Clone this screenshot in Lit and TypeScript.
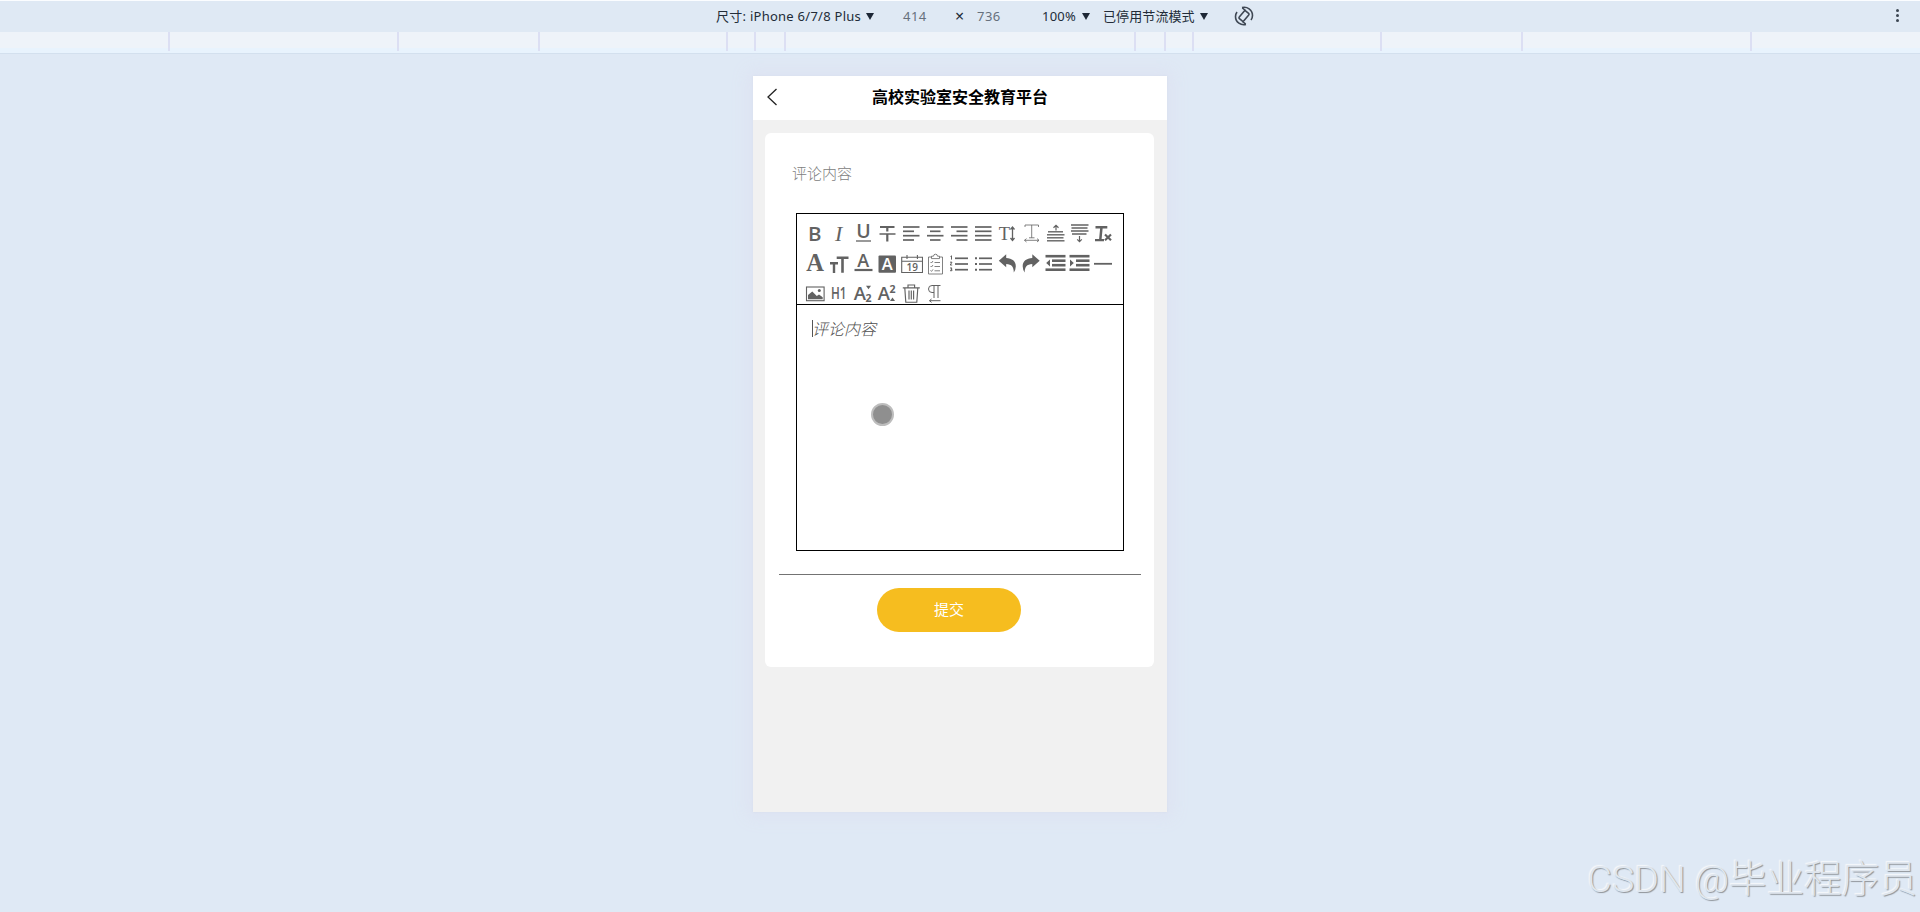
import { LitElement, html, svg, css } from "lit";
import { customElement } from "lit/decorators.js";

// Every glyph is drawn in a 24x30 toolbar cell.
const lines = (rows: number[][], width = 1.7) =>
  svg`${rows.map(
    ([x1, x2, y]) =>
      svg`<line x1=${x1} x2=${x2} y1=${y} y2=${y} stroke-width=${width}></line>`
  )}`;

const calendar = svg`
  <path d="M2.700 8.200h20.800v15.300H2.700zM2.700 12.300h20.800M8 6v4M18.400 6v4" stroke-width="1.100"></path>
  <text x="13.200" y="22" class="sans semi" font-size="10" text-anchor="middle">19</text>`;

const clipboard = svg`
  <path d="M8.500 8H5.500v17h14V8h-3M8.500 9.600V7.200h2a2 2 0 0 1 4 0h2v2.400z" stroke-width=".8"></path>
  <path d="M7.500 13l1 1 1.500-2M7.500 17l1 1 1.500-2M7.500 21.400l1 1 1.500-2M11.500 13.500h5.500M11.500 17.500h5.500M11.500 21.800h5.500" stroke-width=".8"></path>`;

const undo = svg`<path class="fill" d="M3.800 11.700L11.200 5.300V9.100C17 9.200 21 12.500 20.800 17.500Q20.700 20.800 18.800 23.500C18.800 18 16.800 15.200 11.200 15V18.300z"></path>`;

const trash = svg`
  <path d="M3.800 8.800h17M9 8.500V6h6.600v2.500M5.800 9l1 14.200h11L18.800 9M10 11.500v9M12.300 11.500v9M14.600 11.500v9" stroke-width="1.150"></path>`;

const indentRows = lines(
  [[2.5, 22.5, 7.2], [9, 22.5, 11.7], [9, 22.5, 16.2], [2.5, 22.5, 20.7]],
  2.6
);

const ICONS = [
  svg`<text x="5" y="22" class="sans semi" font-size="20.500">B</text>`,
  svg`<text x="8" y="21.800" class="serif italic" font-size="22">I</text>`,
  svg`<text x="12.500" y="19" class="sans semi" font-size="19.500" text-anchor="middle">U</text>${lines([[5, 20, 22]], 1.3)}`,
  svg`${lines([[5, 19.5, 8]], 2)}${lines([[4.5, 20.5, 15]], 1.5)}<path d="M12.300 8v4.500M12.300 15v7.500" stroke-width="2.200"></path>`,
  lines([[4, 20.5, 8], [4, 15, 12.3], [4, 20.5, 16.7], [4, 15, 21]]),
  lines([[4, 20.5, 8], [7, 17.5, 12.3], [4, 20.5, 16.7], [7, 17.5, 21]]),
  lines([[4, 20.5, 8], [9.5, 20.5, 12.3], [4, 20.5, 16.7], [9.5, 20.5, 21]]),
  lines([[4, 20.5, 8], [4, 20.5, 12.3], [4, 20.5, 16.7], [4, 20.5, 21]]),
  svg`<text x="3.800" y="20.800" class="serif" font-size="18.500">T</text>
    <path d="M17.500 8.500v12.500M15.500 10.500l2-2.500 2 2.500M15.500 19l2 2.500 2-2.500" stroke-width="1.300"></path>`,
  svg`<path d="M6 8V6h13.500V8M12.700 6v12.800M10 18.800h5.500M5.500 21.300h14.500M7.500 19.600l-2 1.700 2 1.700M18 19.600l2 1.700-2 1.700" stroke-width=".8"></path>`,
  svg`<path d="M13 11.500V6.500M10.500 8.700L13 6.300l2.500 2.400" stroke-width="1.200"></path>
    ${lines([[5, 20, 12.8], [4, 21.5, 15.8], [4, 20.5, 18.8], [4, 21.5, 21.8]], 1.4)}`,
  svg`${lines([[4, 21.5, 6], [4.5, 20.5, 9], [4, 21.5, 12], [5, 19.5, 15]], 1.5)}
    <path d="M12.500 17v5.500M10.200 20.300l2.300 2.400 2.300-2.400" stroke-width="1.200"></path>`,
  svg`<path d="M4.500 8.200h11.800M10.500 8.200l-1.200 12.500" stroke-width="2.500"></path>
    <path d="M4 21.200h9M14 15.500l6 5.800M20 15.500l-6 5.800" stroke-width="2.200"></path>`,

  svg`<text x="12.200" y="22.200" class="serif bold" font-size="24.500" text-anchor="middle">A</text>`,
  svg`<path d="M3 14.300h8M7 14.300V24" stroke-width="2.400"></path><path d="M9.700 8.800h11.800M15.500 8.800V23.800" stroke-width="2.600"></path>`,
  svg`<text x="12.300" y="18.400" class="sans semi" font-size="18" text-anchor="middle">A</text>${lines([[3.5, 21.5, 21]], 2.2)}`,
  svg`<rect class="fill" x="3.500" y="6.500" width="17.500" height="17.200" rx="1"></rect><text x="12.200" y="21" class="sans semi white" font-size="16.500" text-anchor="middle">A</text>`,
  calendar,
  clipboard,
  svg`${lines([[8, 21, 9.3], [8, 21, 15], [8, 21, 20.7]], 1.7)}
    <path d="M3.500 7.500l1-.7v3.800M3 13.200h2l-1.800 2.800h2M3 19h2l-1 1.300q1.500 0 1 1.400h-2" stroke-width="1"></path>`,
  svg`${lines([[8, 21, 9.3], [8, 21, 15], [8, 21, 20.7]], 1.7)}${lines([[4, 6, 9.3], [4, 6, 15], [4, 6, 20.7]], 2)}`,
  undo,
  svg`<g transform="matrix(-1 0 0 1 24.500 0)">${undo}</g>`,
  svg`${indentRows}<path class="fill" d="M7 10.500v7L3.200 14z"></path>`,
  svg`${indentRows}<path class="fill" d="M3 10.500v7L6.800 14z"></path>`,
  lines([[3, 21, 14.8]], 1.8),

  svg`<rect x="3.500" y="8" width="17.600" height="13.700" stroke-width="1.100"></rect>
    <path class="fill" d="M5 20.200v-4.200l4.300-3.500 4.500 4.500 2.200-1.500 3.700 2.700v2z"></path><circle class="fill" cx="16.300" cy="11.500" r="1.500"></circle>`,
  svg`<text x="4" y="20.300" class="sans semi" font-size="16" textLength="15.500" lengthAdjust="spacingAndGlyphs">H1</text>`,
  svg`<text x="2.800" y="20.800" class="sans semi" font-size="18.500">A</text><text x="14.500" y="22.800" class="sans bold" font-size="10.500">2</text><path class="fill" d="M15 6.800h5l-2.500 3.500z"></path>`,
  svg`<text x="2.800" y="20.800" class="sans semi" font-size="18.500">A</text><text x="14.500" y="13.500" class="sans bold" font-size="10.500">2</text><path class="fill" d="M15 22h5l-2.500-3.500z"></path>`,
  trash,
  svg`<path d="M17.500 6.500H9a3.500 3.500 0 0 0 0 7H11M11 6.500v12.500M15 6.500v12.500M6.500 21.700h11M8.500 20l-2 1.700 2 1.700" stroke-width="1"></path>`,
];

@customElement("editor-toolbar")
export class EditorToolbar extends LitElement {
  static styles = css`
    :host {
      display: flex;
      flex-wrap: wrap;
      height: 91px;
      overflow: hidden;
      padding: 5px 0 0 5.5px;
      box-sizing: border-box;
      align-content: flex-start;
      border-bottom: 1px solid #000;
    }
    svg {
      width: 24px;
      height: 30px;
      flex: none;
      fill: none;
      stroke: #626262;
    }
    .fill {
      fill: #626262;
      stroke: none;
    }
    text {
      fill: #626262;
      stroke: none;
    }
    .sans {
      font-family: "Open Sans", sans-serif;
    }
    .serif {
      font-family: "Liberation Serif", serif;
    }
    .semi {
      font-weight: 600;
    }
    .bold {
      font-weight: 700;
    }
    .italic {
      font-style: italic;
    }
    .white {
      fill: #fff;
    }
  `;

  render() {
    return ICONS.map((icon) => html`<svg viewBox="0 0 24 30">${icon}</svg>`);
  }
}

@customElement("device-bar")
export class DeviceBar extends LitElement {
  static styles = css`
    :host {
      display: block;
      font: 13px/18px "Noto Sans", "Noto Sans CJK SC", sans-serif;
      color: #222c38;
    }
    .bar {
      display: flex;
      align-items: center;
      height: 32px;
      box-sizing: border-box;
      border-top: 1px solid #fbfdff;
      background: #dfe9f4;
      padding: 0 0 2px 716px;
      white-space: nowrap;
    }
    .select {
      display: flex;
      align-items: center;
      justify-content: space-between;
    }
    .select::after {
      content: "";
      margin-top: 1px;
      border: 4px solid transparent;
      border-top: 7px solid #1d2735;
      border-bottom: 0;
    }
    .device {
      width: 158px;
      letter-spacing: 0.26px;
    }
    .num {
      color: #66707c;
      width: 52px;
      margin-left: 29px;
      letter-spacing: 0.5px;
    }
    .times {
      width: 10px;
      font-size: 16px;
      margin-right: -17px;
    }
    .zoom {
      width: 48px;
      margin-left: 13px;
      letter-spacing: 0.2px;
    }
    .throttle {
      width: 105px;
      margin-left: 13px;
      letter-spacing: 0.1px;
    }
    .rotate {
      width: 20px;
      height: 20px;
      margin-left: 26px;
      fill: none;
      stroke: #3f4854;
      stroke-width: 1.6;
    }
    .more {
      display: grid;
      gap: 1.5px;
      margin: 0 21px 0 auto;
    }
    .more i {
      width: 3.5px;
      height: 3.5px;
      border-radius: 50%;
      background: #3c4652;
    }
    .ruler {
      display: flex;
      justify-content: center;
      height: 22px;
      box-sizing: border-box;
      border-bottom: 1px solid #d3e0ee;
      background: linear-gradient(#eef3f9 16px, #e8f3fd 16px);
    }
    .ruler i {
      box-sizing: border-box;
      height: 19px;
      border-right: 2px solid #dcdff3;
    }
    .ruler i:first-child {
      border-left: 2px solid #dcdff3;
    }
  `;

  render() {
    const stops = [231, 141, 188, 28, 30, 350, 30, 28, 188, 141, 229];
    return html`
      <div class="bar">
        <span class="select device">尺寸: iPhone 6/7/8 Plus</span>
        <span class="num">414</span>
        <span class="times">×</span>
        <span class="num">736</span>
        <span class="select zoom">100%</span>
        <span class="select throttle">已停用节流模式</span>
        <svg class="rotate" viewBox="0 0 20 20">
          <rect x="7" y="5" width="6" height="10" rx="1.200" transform="rotate(40 10 10)"></rect>
          <path d="M8 1.600C13 .3 18.500 3.500 18.500 9.500Q18.500 12 17 14M12 18.400C7 19.700 1.500 16.500 1.500 10.500Q1.500 8 3 6"></path>
          <path d="M11.500 4.500L8.300 1.800M8.500 15.500l3.200 2.700"></path>
        </svg>
        <span class="more"><i></i><i></i><i></i></span>
      </div>
      <div class="ruler">
        ${stops.map((w) => html`<i style="width:${w}px"></i>`)}
      </div>
    `;
  }
}

@customElement("app-root")
export class AppRoot extends LitElement {
  static styles = css`
    :host {
      display: block;
      position: relative;
      height: 912px;
      overflow: hidden;
      background: #dfe9f5;
      font-family: "Noto Sans CJK SC", sans-serif;
    }
    .phone {
      width: 414px;
      height: 736px;
      margin: 22px auto 0;
      background: #f1f1f1;
      box-shadow: 0 0 16px 6px #dee3f2, 0 0 2px #c8cfdc;
    }
    header {
      display: grid;
      grid-template-columns: 44px 1fr 44px;
      align-items: center;
      height: 44px;
      background: #fff;
      text-align: center;
      font-size: 16px;
      font-weight: 700;
      color: #000;
    }
    .back {
      width: 12px;
      height: 18px;
      margin: -3px 0 0 13px;
      fill: none;
      stroke: #222;
      stroke-width: 1.3;
    }
    .title {
      line-height: 24px;
      padding-bottom: 4px;
    }
    .card {
      display: flex;
      flex-direction: column;
      width: 389px;
      height: 534px;
      margin: 13px 0 0 12px;
      padding: 0 14px;
      box-sizing: border-box;
      border-radius: 6px;
      background: #fff;
    }
    .label {
      margin: 28px 0 0 13px;
      font-size: 15px;
      font-weight: 300;
      line-height: 24px;
      color: #808080;
    }
    .editor {
      width: 328px;
      height: 338px;
      box-sizing: border-box;
      margin: 28px 0 0 17px;
      border: 1px solid #000;
    }
    .placeholder {
      display: inline-block;
      margin: 15px 0 0 15px;
      border-left: 1px solid #555;
      font-size: 16px;
      font-style: italic;
      font-weight: 300;
      line-height: 17px;
      color: #505050;
      text-indent: -1px;
    }
    hr {
      width: 362px;
      height: 1px;
      margin: 23px 0 0;
      border: 0;
      background: #737373;
    }
    button {
      width: 144px;
      height: 44px;
      margin: 13px 0 0 98px;
      padding: 0 0 4px;
      border: 0;
      border-radius: 22px;
      background: #f6bd1f;
      color: #fff;
      font: 15px "Noto Sans CJK SC", sans-serif;
    }
    .touch {
      position: absolute;
      left: 871px;
      top: 403px;
      width: 23px;
      height: 23px;
      box-sizing: border-box;
      border: 2px solid #bdbdbd;
      border-radius: 50%;
      background: #8f8f8f;
    }
    .watermark {
      position: absolute;
      right: 3px;
      bottom: 11px;
      font: 300 37.6px/44px Roboto, "Noto Sans CJK SC", sans-serif;
      white-space: nowrap;
      color: #dfe6ee;
      text-shadow: 1px 1px 1px #8f949a, -1px -1px 1px #f5f8fb;
    }
  `;

  render() {
    return html`
      <device-bar></device-bar>
      <main class="phone">
        <header>
          <svg class="back" viewBox="0 0 12 18">
            <path d="M10.500 1L2 9l8.500 8"></path>
          </svg>
          <span class="title">高校实验室安全教育平台</span>
        </header>
        <section class="card">
          <div class="label">评论内容</div>
          <div class="editor">
            <editor-toolbar></editor-toolbar>
            <span class="placeholder">评论内容</span>
          </div>
          <hr />
          <button>提交</button>
        </section>
      </main>
      <span class="touch"></span>
      <span class="watermark">CSDN @毕业程序员</span>
    `;
  }
}
